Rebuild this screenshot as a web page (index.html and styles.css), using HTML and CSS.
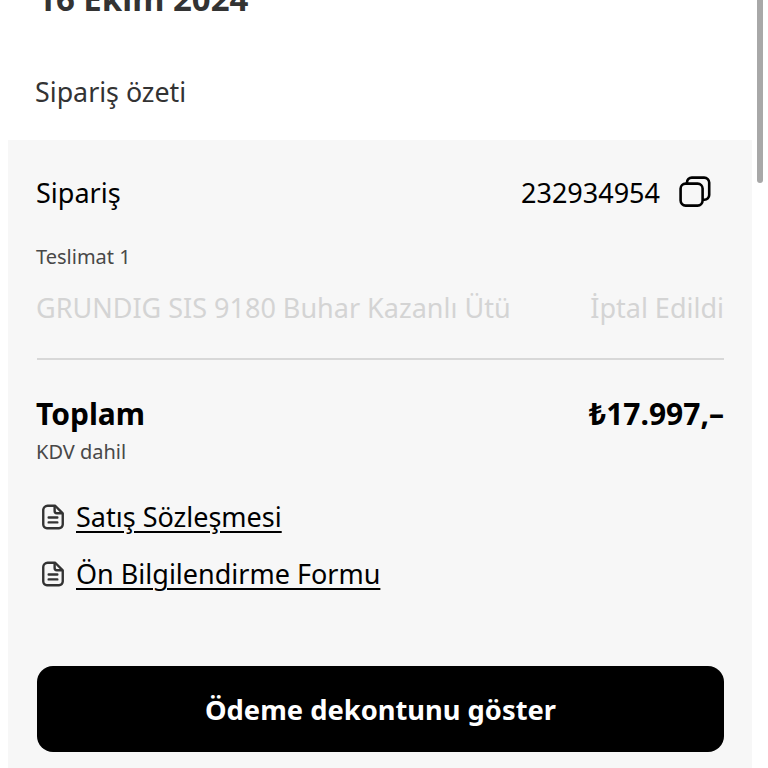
FILE: index.html
```html
<!DOCTYPE html>
<html lang="tr">
<head>
<meta charset="utf-8">
<title>Sipariş özeti</title>
<link rel="stylesheet" href="styles.css">
</head>
<body>
<div class="page">
  <h1 class="date">16 Ekim 2024</h1>
  <h2 class="summary-title">Sipariş özeti</h2>
  <section class="panel">
    <div class="row order-row">
      <span class="lead">Sipariş</span>
      <span class="order-id">
        <span>232934954</span>
        <svg class="copy-icon" viewBox="0 0 32 32" fill="none" stroke="#000" stroke-width="2.6" stroke-linejoin="round">
          <rect x="1.6" y="7.6" width="22" height="22" rx="5"/>
          <path d="M8 7.6V6.4a4.8 4.8 0 0 1 4.8-4.8h12.4a5 5 0 0 1 5 5v12.4a4.8 4.8 0 0 1-4.8 4.8h-1.8"/>
        </svg>
      </span>
    </div>
    <div class="delivery lead">Teslimat 1</div>
    <div class="row item-row">
      <span class="lead">GRUNDIG SIS 9180 Buhar Kazanlı Ütü</span>
      <span>İptal Edildi</span>
    </div>
    <div class="divider"></div>
    <div class="row total-row">
      <span class="lead">Toplam</span>
      <span>₺17.997,–</span>
    </div>
    <div class="tax lead">KDV dahil</div>
    <ul class="links">
      <li class="link-item">
        <svg class="doc-icon" viewBox="0 0 24 24" fill="none" stroke="#333" stroke-width="2.2" stroke-linejoin="round" stroke-linecap="round">
          <path d="M7 1.6h7l7 7V19a3.4 3.4 0 0 1-3.4 3.4H6.4A3.4 3.4 0 0 1 3 19V5.6a4 4 0 0 1 4-4z"/>
          <path d="M13.5 2v4.5a2 2 0 0 0 2 2H20M8 12.5h8M8 17h8"/>
        </svg>
        <a class="link" href="#">Satış Sözleşmesi</a>
      </li>
      <li class="link-item">
        <svg class="doc-icon" viewBox="0 0 24 24" fill="none" stroke="#333" stroke-width="2.2" stroke-linejoin="round" stroke-linecap="round">
          <path d="M7 1.6h7l7 7V19a3.4 3.4 0 0 1-3.4 3.4H6.4A3.4 3.4 0 0 1 3 19V5.6a4 4 0 0 1 4-4z"/>
          <path d="M13.5 2v4.5a2 2 0 0 0 2 2H20M8 12.5h8M8 17h8"/>
        </svg>
        <a class="link" href="#">Ön Bilgilendirme Formu</a>
      </li>
    </ul>
    <button class="cta" type="button">Ödeme dekontunu göster</button>
  </section>
</div>
<div class="scrollbar"></div>
</body>
</html>
```
FILE: styles.css
```css
* { box-sizing: border-box; }
html, body {
  margin: 0;
  height: 768px;
  overflow: hidden;
  background: #fff;
  font-family: "Noto Sans", sans-serif;
}
.page {
  display: flex;
  flex-direction: column;
  margin-top: -20px;
}
.date {
  margin: 0 0 0 37px;
  font-size: 33px;
  line-height: 38px;
  font-weight: 700;
  color: #333;
}
.summary-title {
  margin: 54px 0 0 35px;
  font-size: 26.8px;
  line-height: 40px;
  font-weight: 400;
  color: #333;
}
.panel {
  margin: 28px 16px 0 8px;
  height: 628px;
  background: #f7f7f7;
  padding: 32px 28px 0 29px;
  display: flex;
  flex-direction: column;
}
.lead {
  margin-left: -1px;
}
.row {
  display: flex;
  justify-content: space-between;
  align-items: center;
}
.order-row {
  height: 40px;
  color: #000;
  font-size: 27px;
}
.order-id {
  display: flex;
  align-items: center;
  gap: 19px;
  padding-right: 13px;
}
.copy-icon {
  width: 32px;
  height: 32px;
  display: block;
}
.delivery {
  margin-top: 31px;
  font-size: 20px;
  line-height: 28px;
  color: #484848;
}
.item-row {
  margin-top: 19px;
  font-size: 27px;
  line-height: 36px;
  color: #d4d4d4;
}
.divider {
  margin-top: 32px;
  height: 2px;
  background: #d8d8d8;
}
.total-row {
  margin-top: 32px;
  font-size: 30px;
  line-height: 44px;
  font-weight: 700;
  color: #000;
}
.tax {
  margin-top: 2px;
  font-size: 20px;
  line-height: 28px;
  color: #484848;
}
.links {
  list-style: none;
  margin: 31px 0 0;
  padding: 0;
  display: flex;
  flex-direction: column;
  gap: 17px;
}
.link-item {
  display: flex;
  align-items: center;
  gap: 10px;
  height: 40px;
  padding-left: 3px;
}
.doc-icon {
  width: 26px;
  height: 26px;
  display: block;
}
.link {
  font-size: 27px;
  line-height: 36px;
  color: #000;
  text-decoration: underline;
  text-decoration-thickness: 2px;
  text-underline-offset: 4px;
}
.cta {
  margin-top: 72px;
  height: 86px;
  border: 0;
  border-radius: 16px;
  background: #000;
  color: #fff;
  font-family: inherit;
  font-size: 27.3px;
  font-weight: 700;
}
.scrollbar {
  position: absolute;
  top: 0;
  left: 757px;
  width: 6px;
  height: 183px;
  border-radius: 0 0 3px 3px;
  background: #a8a8a8;
}
```
